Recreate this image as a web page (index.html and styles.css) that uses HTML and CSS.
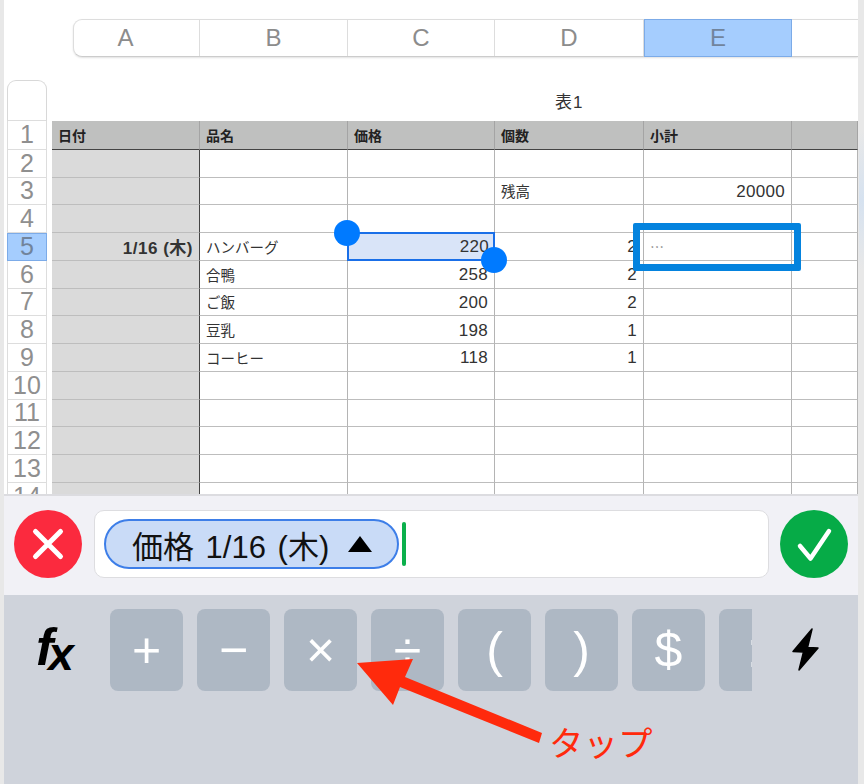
FILE: index.html
```html
<!DOCTYPE html>
<html lang="ja">
<head>
  <meta charset="UTF-8">
  <title>表1</title>
  <link rel="stylesheet" href="styles.css">
</head>
<body>
  <div class="screen">
    <div class="app">

      <div class="sheet">
        <div class="col-bar">
          <div class="col-head col-first">A</div>
          <div class="col-head">B</div>
          <div class="col-head">C</div>
          <div class="col-head">D</div>
          <div class="col-head col-active">E</div>
          <div class="col-head col-rest"></div>
        </div>

        <div class="sheet-body">
          <div class="row-bar">
            <div class="row-corner"></div>
            <div id="row-numbers"></div>
          </div>
          <div class="table-wrap">
            <div class="table-title">表1</div>
            <div class="grid" id="grid"></div>
          </div>
        </div>
      </div>

      <div class="editor">
        <div class="round-btn btn-cancel">
          <svg width="68" height="68" viewBox="0 0 68 68"><path d="M21.500 21.500L46.500 46.500M46.500 21.500L21.500 46.500" stroke="#fff" stroke-width="5" stroke-linecap="round"/></svg>
        </div>
        <div class="formula-box">
          <div class="chip">
            <span>価格 1/16 (木)</span>
            <i class="chip-arrow"></i>
          </div>
          <div class="caret"></div>
        </div>
        <div class="round-btn btn-ok">
          <svg width="68" height="68" viewBox="0 0 68 68"><path d="M20 36L30.500 48.500L49 21" fill="none" stroke="#fff" stroke-width="4.500" stroke-linecap="round" stroke-linejoin="round"/></svg>
        </div>
      </div>

      <div class="keyboard">
        <div class="fx"><i>f</i><i class="fx-x">x</i></div>
        <div class="keys">
          <div class="key">+</div>
          <div class="key">−</div>
          <div class="key">×</div>
          <div class="key">÷</div>
          <div class="key">(</div>
          <div class="key">)</div>
          <div class="key">$</div>
          <div class="key key-cut">:</div>
        </div>
        <svg class="bolt" width="30" height="46" viewBox="0 0 30 46"><path d="M21 2L2 24.500L12.500 25L8 43L27 21L16.500 20.500Z" fill="#000" stroke="#000" stroke-width="1.500" stroke-linejoin="round"/></svg>

        <!-- annotation drawn on top of the keyboard -->
        <svg class="tap-arrow" width="200" height="90" viewBox="0 0 200 90"><path d="M7 8L63 4L55 22L192 78L189 88L50 32L43 50Z" fill="#ff2a0c"/></svg>
        <div class="tap-label">タップ</div>
      </div>

    </div>
  </div>

  <script>
    const rows = [
      ['日付', '品名', '価格', '個数', '小計', ''],
      ['', '', '', '', '', ''],
      ['', '', '', '残高', '20000', ''],
      ['', '', '', '', '', ''],
      ['1/16 (木)', 'ハンバーグ', '220', '2', '⋯', ''],
      ['', '合鴨', '258', '2', '', ''],
      ['', 'ご飯', '200', '2', '', ''],
      ['', '豆乳', '198', '1', '', ''],
      ['', 'コーヒー', '118', '1', '', ''],
      ['', '', '', '', '', ''],
      ['', '', '', '', '', ''],
      ['', '', '', '', '', ''],
      ['', '', '', '', '', ''],
      ['', '', '', '', '', '']
    ];

    const numbers = document.getElementById('row-numbers');
    const grid = document.getElementById('grid');

    rows.forEach((row, r) => {
      const num = document.createElement('div');
      num.className = 'row-num' + (r === 4 ? ' row-active' : '');
      num.textContent = r + 1;
      numbers.appendChild(num);

      row.forEach((text, c) => {
        const cell = document.createElement('div');
        cell.className = 'cell';
        if (r === 0) cell.classList.add('cell-head');
        else if (c === 0) cell.classList.add('cell-side');
        if (/^[\d]+$/.test(text)) cell.classList.add('cell-num');
        cell.textContent = text;

        if (r === 4 && c === 2) {
          cell.classList.add('cell-selected');
          cell.innerHTML += '<i class="handle handle-start"></i><i class="handle handle-end"></i>';
        }
        if (r === 4 && c === 4) {
          cell.classList.add('cell-dots');
          cell.innerHTML += '<i class="target-box"></i>';
        }
        grid.appendChild(cell);
      });
    });
  </script>
</body>
</html>
```

FILE: styles.css
```css
* {
  margin: 0;
  padding: 0;
  box-sizing: border-box;
}
body {
  font-family: "Liberation Sans", "Noto Sans CJK JP", sans-serif;
  background-color: #e8e8e8;
  overflow: hidden;
}
.screen {
  width: 864px;
  height: 784px;
  padding: 0 6px 0 4px;
  background: linear-gradient(to bottom, #e8e8e8, #d6e2f0 50%, #e8e8e8) right 130px / 5px 140px no-repeat #e8e8e8;
}
.app {
  height: 784px;
  display: flex;
  flex-direction: column;
  background-color: white;
}

/* sheet */
.sheet {
  height: 494px;
  padding-top: 19px;
  overflow: hidden;
}
.col-bar {
  display: grid;
  grid-template-columns: 126px 148px 147px 149px 148px 67px;
  height: 38px;
  margin-left: 69px;
  background-color: white;
  border-top: 1px solid #ddd;
  border-bottom: 1px solid #ccc;
  border-left: 1px solid #ddd;
  border-radius: 9px 0 0 9px;
  box-shadow: 0 1px 2px rgba(0, 0, 0, 0.12);
}
.col-head {
  display: flex;
  align-items: center;
  justify-content: center;
  font-size: 24px;
  color: #8c8c8c;
  border-right: 1px solid #ddd;
}
.col-first {
  padding-right: 22px;
}
.col-rest {
  border-right: none;
}
.col-active {
  background-color: #a5cdfe;
  border: 1px solid #7cabe8;
  margin: -1px 0;
  color: #71849c;
}
.sheet-body {
  display: flex;
  margin-top: 23px;
}
.row-bar {
  width: 40px;
  margin-left: 3px;
  margin-right: 5px;
  flex-shrink: 0;
}
.row-corner {
  height: 41px;
  border: 1px solid #d8d8d8;
  border-bottom: 1px solid #ddd;
  border-radius: 9px 9px 0 0;
}
.row-num {
  height: 27.750px;
  display: flex;
  align-items: center;
  justify-content: center;
  font-size: 25px;
  color: #8f8f8f;
  border: 1px solid #ddd;
  border-top: none;
}
.row-num:first-child {
  height: 28.750px;
}
.row-active {
  background-color: #a5cdfe;
  border: 1px solid #7cabe8;
  color: #71849c;
}
.table-wrap {
  flex: 1;
  min-width: 0;
}
.table-title {
  height: 41px;
  padding: 12px 0 0 503px;
  font-size: 17px;
  letter-spacing: 1px;
  line-height: 22px;
  color: #333;
}
.grid {
  display: grid;
  grid-template-columns: 148px 148px 147px 149px 148px 66px;
  grid-template-rows: 28.750px;
  grid-auto-rows: 27.750px;
}
.cell {
  position: relative;
  display: flex;
  align-items: center;
  justify-content: flex-start;
  padding: 0 6px 0 6px;
  font-size: 14.500px;
  color: #333;
  border-right: 1px solid #b4b4b4;
  border-bottom: 1.500px solid #bdbdbd;
}
.cell-head {
  background-color: #bfc0bf;
  font-weight: bold;
  font-size: 14px;
  color: #222;
  border-right: 1px solid #a4a4a4;
  border-bottom: 1.500px solid #444;
}
.cell-side {
  background-color: #dadada;
  justify-content: flex-end;
  font-weight: bold;
  font-size: 17px;
  letter-spacing: 0.500px;
  border-right: 1px solid #444;
}
.cell-num {
  justify-content: flex-end;
  padding-top: 2px;
  font-size: 17px;
  letter-spacing: 0.300px;
}
.cell-selected {
  background-color: #d9e4f8;
  border: 2px solid #1a6fe8;
  margin: -1px 0 0 -1px;
  padding-right: 4px;
}
.cell-dots {
  color: #888;
  font-size: 14px;
}
.handle {
  position: absolute;
  width: 26px;
  height: 26px;
  border-radius: 50%;
  background-color: #007aff;
  z-index: 2;
}
.handle-start {
  left: -15px;
  top: -14px;
}
.handle-end {
  right: -14px;
  bottom: -14px;
}
.target-box {
  position: absolute;
  left: -11px;
  top: -10px;
  width: 168px;
  height: 47.500px;
  border: 7px solid #0483de;
  border-radius: 2px;
  z-index: 2;
}

/* formula editor */
.editor {
  height: 101px;
  display: flex;
  align-items: center;
  gap: 11px;
  padding: 0 10px 3px 9.500px;
  background-color: #f1f1f6;
  border-top: 2px solid #dcdce0;
}
.round-btn {
  width: 68px;
  height: 68px;
  border-radius: 50%;
  flex-shrink: 0;
}
.round-btn svg {
  display: block;
}
.btn-cancel {
  background-color: #fb2a3e;
  margin-right: 1px;
}
.btn-ok {
  background-color: #06ab47;
}
.formula-box {
  flex: 1;
  height: 68px;
  display: flex;
  align-items: center;
  gap: 3px;
  padding-left: 9.500px;
  background-color: white;
  border: 1px solid #dddde0;
  border-radius: 10px;
}
.chip {
  width: 295px;
  height: 50px;
  display: flex;
  align-items: center;
  gap: 19px;
  padding-left: 26px;
  background-color: #c9dbf7;
  border: 2px solid #3d7ee8;
  border-radius: 25px;
  font-size: 31px;
  word-spacing: 3px;
  color: #111;
  white-space: nowrap;
}
.chip-arrow {
  width: 0;
  height: 0;
  border-left: 12.500px solid transparent;
  border-right: 12.500px solid transparent;
  border-bottom: 16px solid #000;
}
.caret {
  width: 4px;
  height: 44px;
  border-radius: 2px;
  background-color: #0bb04c;
}

/* keyboard */
.keyboard {
  position: relative;
  flex: 1;
  display: flex;
  align-items: flex-start;
  background-color: #cfd3db;
}
.fx {
  width: 106px;
  padding: 26px 0 0 32px;
  font-family: "Liberation Sans", sans-serif;
  font-weight: bold;
  line-height: 1;
  color: #000;
  white-space: nowrap;
}
.fx i {
  font-size: 52px;
}
.fx .fx-x {
  font-size: 46px;
  margin-left: -5px;
  position: relative;
  top: 5px;
}
.keys {
  width: 642px;
  display: flex;
  gap: 14px;
  margin-top: 14px;
  overflow: hidden;
}
.key {
  width: 73px;
  height: 82px;
  flex-shrink: 0;
  display: flex;
  align-items: center;
  justify-content: center;
  background-color: #aeb8c4;
  border-radius: 8px;
  font-size: 50px;
  color: white;
}
.key-cut {
  padding-right: 3px;
}
.bolt {
  margin: 32px 0 0 39px;
}
.tap-arrow {
  position: absolute;
  left: 346px;
  top: 60px;
}
.tap-label {
  position: absolute;
  left: 545px;
  top: 124px;
  font-family: "Noto Sans CJK JP", sans-serif;
  font-size: 34.500px;
  line-height: 44px;
  color: #ff2a0c;
  white-space: nowrap;
}
```
